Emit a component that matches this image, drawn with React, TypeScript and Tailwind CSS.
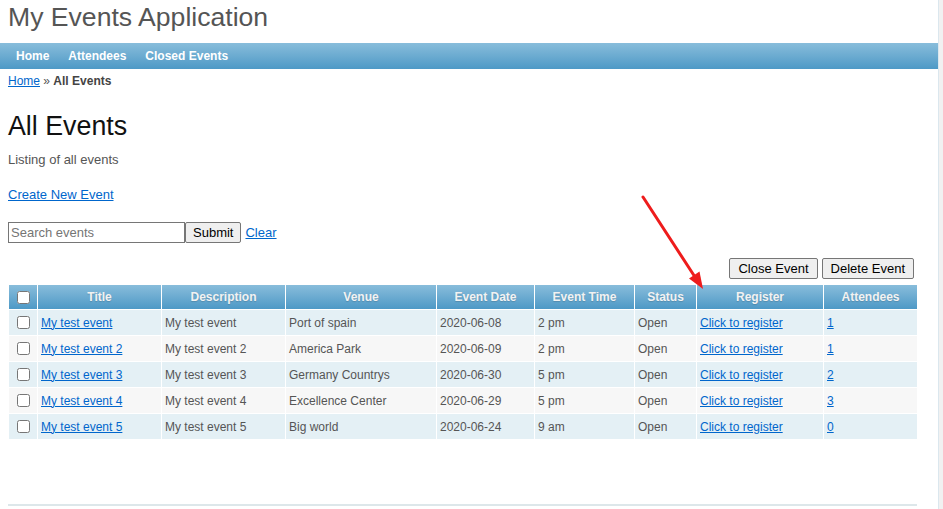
import React from "react";

const events = [
  { title: "My test event", desc: "My test event", venue: "Port of spain", date: "2020-06-08", time: "2 pm", att: "1" },
  { title: "My test event 2", desc: "My test event 2", venue: "America Park", date: "2020-06-09", time: "2 pm", att: "1" },
  { title: "My test event 3", desc: "My test event 3", venue: "Germany Countrys", date: "2020-06-30", time: "5 pm", att: "2" },
  { title: "My test event 4", desc: "My test event 4", venue: "Excellence Center", date: "2020-06-29", time: "5 pm", att: "3" },
  { title: "My test event 5", desc: "My test event 5", venue: "Big world", date: "2020-06-24", time: "9 am", att: "0" },
];

const headers = ["Title", "Description", "Venue", "Event Date", "Event Time", "Status", "Register", "Attendees"];
const widths = [28, 123, 123, 150, 97, 99, 61, 126, 93];

export default function App() {
  return (
    <div className="flex h-[509px] w-[943px] overflow-hidden bg-white font-['Liberation_Sans',Arial,sans-serif]">
      <div className="relative w-[938px] shrink-0">
        <div className="px-[8px] pt-[2px]">
          <h1 className="text-[26.6px] leading-[30px] font-normal text-[#555555]">My Events Application</h1>
        </div>
        <nav className="mt-[11px] flex h-[26px] items-center gap-[19px] bg-gradient-to-b from-[#88bddb] to-[#4d99c6] pl-[16px] text-[12px] font-bold text-white">
          <a href="#" className="text-white">Home</a>
          <a href="#" className="text-white">Attendees</a>
          <a href="#" className="text-white">Closed Events</a>
        </nav>
        <div className="mt-[5px] px-[8px] text-[12px] leading-[14px] text-[#555555]">
          <a href="#" className="text-[#0066cc] underline">Home</a>
          <span> » </span>
          <span className="font-bold text-[#444444]">All Events</span>
        </div>
        <div className="px-[8px]">
          <h2 className="mt-[23px] text-[26.8px] leading-[30px] font-normal text-[#111111]">All Events</h2>
          <p className="mt-[11px] text-[13px] leading-[15px] text-[#555555]">Listing of all events</p>
          <div className="mt-[20px] text-[13px] leading-[15px]">
            <a href="#" className="text-[#0066cc] underline">Create New Event</a>
          </div>
          <form className="mt-[20px] flex h-[21px] items-center text-[13px]" onSubmit={(e) => e.preventDefault()}>
            <input
              type="text"
              placeholder="Search events"
              className="h-[21px] w-[177px] border border-[#767676] px-[2px] text-[13px] text-black placeholder:text-[#757575] outline-none"
            />
            <button type="submit" className="h-[21px] rounded-[2px] border border-[#767676] bg-[#efefef] px-[7px] text-[13px] leading-[19px] text-black">
              Submit
            </button>
            <a href="#" className="ml-[4px] text-[#0066cc] underline">Clear</a>
          </form>
          <div className="mt-[15px] flex h-[21px] w-[910px] justify-end gap-[4px] pr-[4px]">
            <button className="h-[21px] rounded-[2px] border border-[#767676] bg-[#efefef] px-[8px] text-[13px] leading-[19px] text-black">Close Event</button>
            <button className="h-[21px] rounded-[2px] border border-[#767676] bg-[#efefef] px-[8px] text-[13px] leading-[19px] text-black">Delete Event</button>
          </div>
        </div>
        <table className="mt-[5px] ml-[8px] w-[910px] table-fixed border-separate border-spacing-[1px] text-[12px]">
          <colgroup>
            {widths.map((w, i) => (
              <col key={i} style={{ width: w }} />
            ))}
          </colgroup>
          <thead>
            <tr>
              <th className="h-[24px] bg-gradient-to-b from-[#88bddb] to-[#4d99c6] p-0 align-middle">
                <div className="flex items-center justify-center pl-[1px]">
                  <input type="checkbox" className="m-0 h-[13px] w-[13px]" />
                </div>
              </th>
              {headers.map((h) => (
                <th key={h} className="h-[24px] bg-gradient-to-b from-[#88bddb] to-[#4d99c6] p-0 text-center font-bold text-[#f2f2f2] [text-shadow:0_1px_1px_rgba(0,0,0,0.15)]">
                  {h}
                </th>
              ))}
            </tr>
          </thead>
          <tbody>
            {events.map((ev, i) => {
              const bg = i % 2 === 0 ? "bg-[#e4f0f5]" : "bg-[#f7f7f7]";
              return (
                <tr key={i}>
                  <td className={`h-[25px] p-0 ${bg}`}>
                    <div className="flex items-center justify-center">
                      <input type="checkbox" className="m-0 h-[13px] w-[13px]" />
                    </div>
                  </td>
                  <td className={`h-[25px] py-0 pl-[3px] ${bg}`}>
                    <a href="#" className="text-[#0066cc] underline">{ev.title}</a>
                  </td>
                  <td className={`h-[25px] py-0 pl-[3px] text-[#555555] ${bg}`}>{ev.desc}</td>
                  <td className={`h-[25px] py-0 pl-[3px] text-[#555555] ${bg}`}>{ev.venue}</td>
                  <td className={`h-[25px] py-0 pl-[3px] text-[#555555] ${bg}`}>{ev.date}</td>
                  <td className={`h-[25px] py-0 pl-[3px] text-[#555555] ${bg}`}>{ev.time}</td>
                  <td className={`h-[25px] py-0 pl-[3px] text-[#555555] ${bg}`}>Open</td>
                  <td className={`h-[25px] py-0 pl-[3px] ${bg}`}>
                    <a href="#" className="text-[#0066cc] underline">Click to register</a>
                  </td>
                  <td className={`h-[25px] py-0 pl-[3px] ${bg}`}>
                    <a href="#" className="text-[#0066cc] underline">{ev.att}</a>
                  </td>
                </tr>
              );
            })}
          </tbody>
        </table>
        <div className="mt-[64px] ml-[8px] h-[2px] w-[909px] bg-[#dde7ea]" />
        <svg className="pointer-events-none absolute left-0 top-0" width="938" height="509" viewBox="0 0 938 509">
          <line x1="643" y1="197" x2="695" y2="277" stroke="#ee1c1c" strokeWidth="3" strokeLinecap="round" />
          <polygon points="703,289 699.5,271.5 689,278.5" fill="#ee1c1c" />
        </svg>
      </div>
      <div className="h-[509px] flex-1 border-l border-[#dbe7ee] bg-[#f1f1f1]" />
    </div>
  );
}
